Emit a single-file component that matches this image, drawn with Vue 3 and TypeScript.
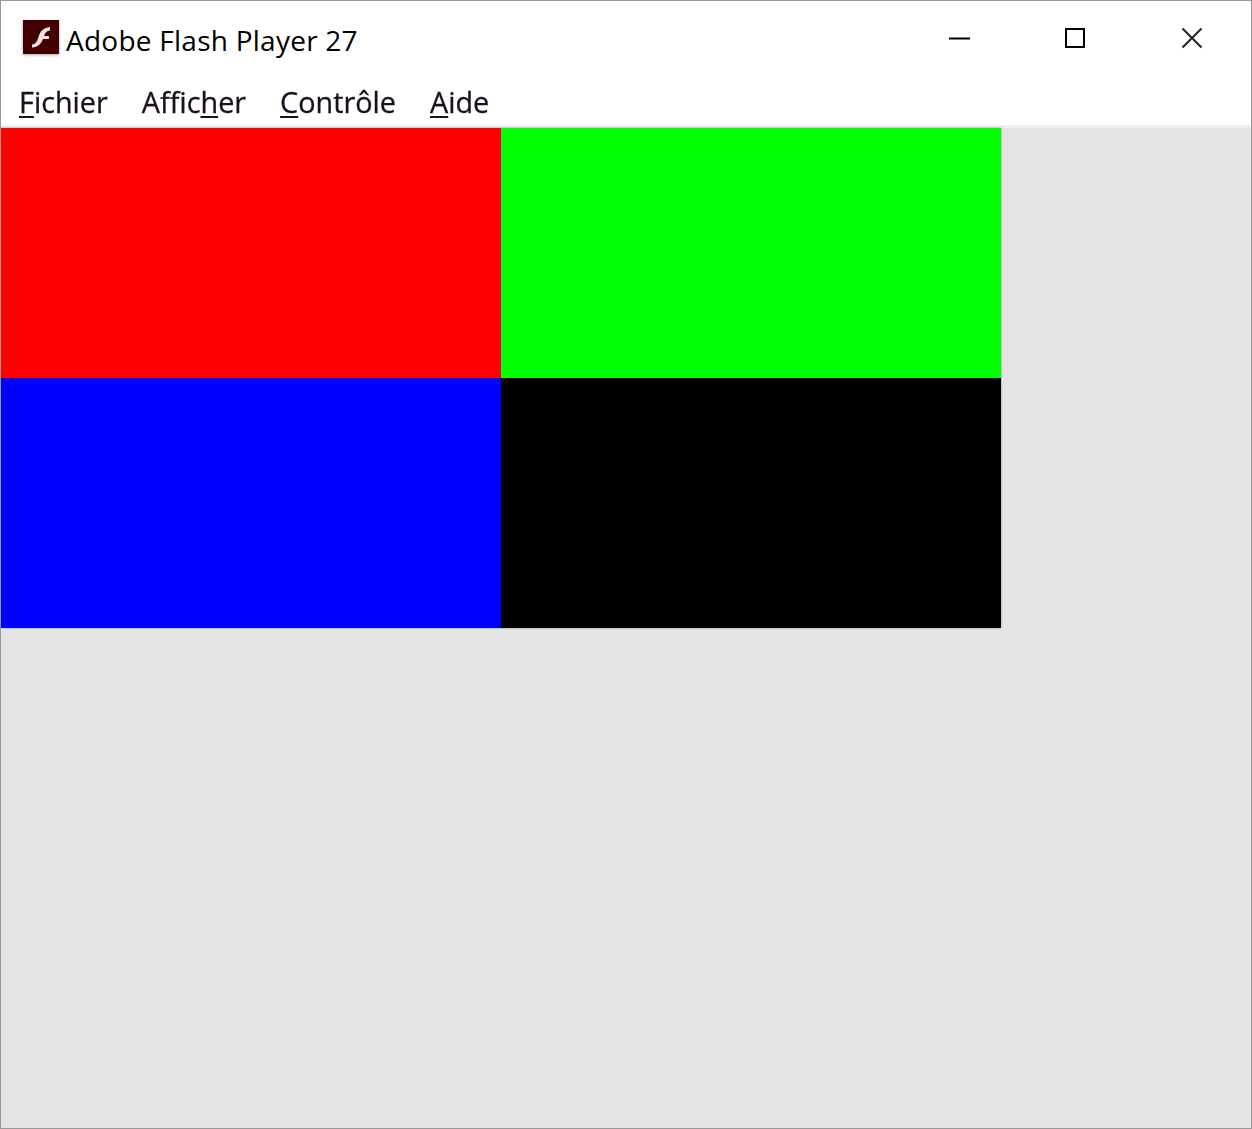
<template>
  <div class="window">
    <header class="titlebar">
      <div class="app-icon">
        <svg width="36" height="34" viewBox="0 0 36 34">
          <rect width="36" height="34" fill="#430000" />
          <path
            d="M9 24.500c3.500-.2 5-2.800 6.500-7.500C17 12 19.500 7.800 27 7v3.500c-3.500.4-5 2.400-6 5.500h5v3h-6c-2 5-5 8.300-11 8.500z"
            fill="#f1e4e4"
          />
        </svg>
      </div>
      <span class="title">Adobe Flash Player 27</span>
      <div class="controls">
        <button class="control">
          <svg width="22" height="22" viewBox="0 0 22 22"><path d="M0 11.500h21" stroke="#000" stroke-width="2" fill="none" /></svg>
        </button>
        <button class="control">
          <svg width="22" height="22" viewBox="0 0 22 22"><rect x="1" y="2" width="18" height="18" stroke="#000" stroke-width="2" fill="none" /></svg>
        </button>
        <button class="control">
          <svg width="22" height="22" viewBox="0 0 22 22"><path d="M1.500 1.500l19 19M20.500 1.500l-19 19" stroke="#222" stroke-width="2" fill="none" /></svg>
        </button>
      </div>
    </header>

    <nav class="menubar">
      <span v-for="item in menu" :key="item.before + item.key" class="menu-item">{{ item.before }}<u>{{ item.key }}</u>{{ item.after }}</span>
    </nav>

    <main class="stage">
      <div class="grid">
        <div v-for="color in cells" :key="color" class="cell" :style="{ background: color }"></div>
      </div>
    </main>
  </div>
</template>

<script setup lang="ts">
interface MenuItem {
  before: string
  key: string
  after: string
}

const menu: MenuItem[] = [
  { before: '', key: 'F', after: 'ichier' },
  { before: 'Affic', key: 'h', after: 'er' },
  { before: '', key: 'C', after: 'ontrôle' },
  { before: '', key: 'A', after: 'ide' },
]

const cells = ['#ff0000', '#00ff00', '#0000ff', '#000000']
</script>

<style>
html,
body {
  margin: 0;
  background: #fff;
}
</style>

<style scoped>
.window {
  box-sizing: border-box;
  width: 1252px;
  height: 1129px;
  border: 1px solid #999;
  display: flex;
  flex-direction: column;
  background: #fff;
  font-family: "Open Sans", "Noto Sans", sans-serif;
  color: #000;
  overflow: hidden;
}

.titlebar {
  height: 78px;
  display: flex;
  align-items: flex-start;
  padding-left: 22px;
  flex-shrink: 0;
}

.app-icon {
  width: 36px;
  height: 34px;
  margin-top: 19px;
  box-shadow: 0 1px 3px rgba(0, 0, 0, 0.35);
}

.app-icon svg {
  display: block;
}

.title {
  margin-left: 7px;
  margin-top: 19px;
  font-size: 28px;
  line-height: 40px;
  letter-spacing: 0.25px;
  white-space: nowrap;
}

.controls {
  margin-left: auto;
  display: flex;
  margin-top: 26px;
  margin-right: 48px;
  gap: 94px;
}

.control {
  width: 22px;
  height: 22px;
  padding: 0;
  border: 0;
  background: none;
  display: block;
}

.control svg {
  display: block;
  overflow: visible;
}

.menubar {
  height: 46px;
  display: flex;
  gap: 34px;
  padding-left: 18px;
  flex-shrink: 0;
  font-size: 28.8px;
  line-height: 46px;
  color: #1a1020;
  -webkit-text-stroke: 0.3px #1a1020;
  filter: blur(0.5px);
}

.menu-item {
  white-space: nowrap;
}

.menu-item u {
  text-underline-offset: 3px;
  text-decoration-thickness: 2px;
}

.stage {
  flex: 1;
  background: #e4e4e4;
  border-top: 3px solid #efefef;
  min-height: 0;
}

.grid {
  display: grid;
  grid-template-columns: 500px 500px;
  grid-template-rows: 250px 250px;
  width: 1000px;
  box-shadow: 0 0 1.5px rgba(0, 0, 0, 0.5);
}
</style>
